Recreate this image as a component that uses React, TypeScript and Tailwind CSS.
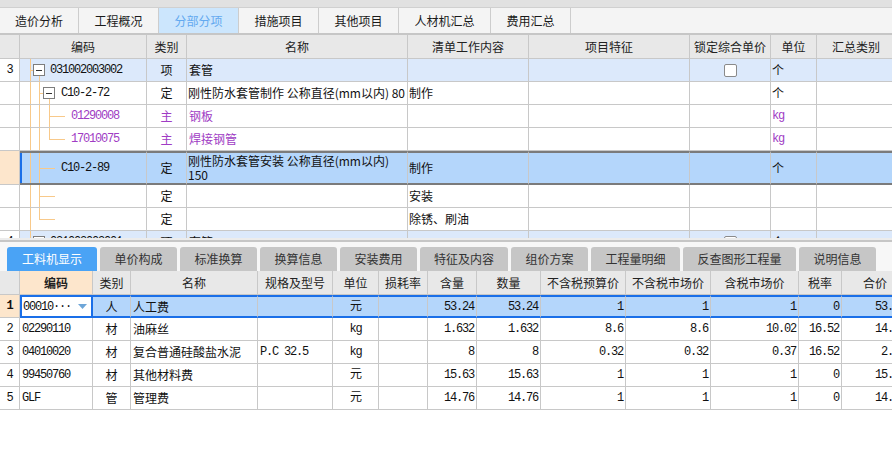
import React from 'react';

const CJK = "font-['Noto_Sans_CJK_SC',sans-serif]";
const MONO = "font-['Liberation_Mono','Noto_Sans_CJK_SC',monospace] tracking-[-1.2px]";
const C = 'border-r border-b border-[#c8c8c8]';
const ORANGE = '#f8c98a';
const PURPLE = 'text-[#a03cc4]';

const topTabs = [
  { t: '造价分析', w: 'w-[79px]' },
  { t: '工程概况', w: 'w-[80px]' },
  { t: '分部分项', w: 'w-[80px]', active: true },
  { t: '措施项目', w: 'w-[80px]' },
  { t: '其他项目', w: 'w-[80px]' },
  { t: '人材机汇总', w: 'w-[92px]' },
  { t: '费用汇总', w: 'w-[80px]' },
];

const bottomTabs = [
  { t: '工料机显示', w: 'w-[90px]', active: true },
  { t: '单价构成', w: 'w-[77px]' },
  { t: '标准换算', w: 'w-[77px]' },
  { t: '换算信息', w: 'w-[77px]' },
  { t: '安装费用', w: 'w-[77px]' },
  { t: '特征及内容', w: 'w-[88px]' },
  { t: '组价方案', w: 'w-[77px]' },
  { t: '工程量明细', w: 'w-[89px]' },
  { t: '反查图形工程量', w: 'w-[113px]' },
  { t: '说明信息', w: 'w-[77px]' },
];

// tree connector drawing for the 编码 column
function Tree({
  w,
  h,
  v,
  hz,
  box,
}: {
  w: number;
  h: number;
  v: [number, number, number][];
  hz?: [number, number, number];
  box?: number;
}) {
  const cy = Math.floor(h / 2);
  return (
    <svg width={w} height={h} className="shrink-0">
      {v.map(([x, y1, y2], i) => (
        <line key={i} x1={x + 0.5} y1={y1} x2={x + 0.5} y2={y2} stroke={ORANGE} />
      ))}
      {hz && <line x1={hz[0]} y1={hz[2] + 0.5} x2={hz[1]} y2={hz[2] + 0.5} stroke={ORANGE} />}
      {box !== undefined && (
        <g>
          <rect x={box + 0.5} y={cy - 5.5} width={11} height={11} fill="white" stroke="#7d7d7d" />
          <line x1={box + 3} y1={cy + 0.5} x2={box + 9} y2={cy + 0.5} stroke="#333" />
        </g>
      )}
    </svg>
  );
}

function Check() {
  return <div className="w-[13px] h-[13px] rounded-[2px] border border-[#8a8a8a] bg-white" />;
}

const UCOLS = 'grid w-max grid-cols-[20px_127px_40px_221px_121px_161px_81px_46px_79px]';

function UpperTable() {
  const head = ['', '编码', '类别', '名称', '清单工作内容', '项目特征', '锁定综合单价', '单位', '汇总类别'];
  const cell = `${C} flex items-center overflow-hidden whitespace-nowrap`;
  const blue = 'bg-[#dce9fb]';
  return (
    <div className="h-[203px] overflow-hidden">
      <div className={`${UCOLS} h-[24px] bg-[#e8e8e8]`}>
        {head.map((h, i) => (
          <div key={i} className={`${C} flex items-center justify-center text-[#222]`}>
            {h}
          </div>
        ))}
      </div>

      {/* row 1 */}
      <div className={`${UCOLS} h-[23px]`}>
        <div className={`${cell} justify-center ${MONO}`}>3</div>
        <div className={`${cell} ${blue}`}>
          <Tree w={30} h={22} v={[[10, 0, 22], [19, 17, 22]]} hz={[10, 13, 11]} box={13} />
          <span className={MONO}>031002003002</span>
        </div>
        <div className={`${cell} ${blue} justify-center`}>项</div>
        <div className={`${cell} ${blue} pl-[2px]`}>套管</div>
        <div className={`${cell} ${blue}`} />
        <div className={`${cell} ${blue}`} />
        <div className={`${cell} ${blue} justify-center`}>
          <Check />
        </div>
        <div className={`${cell} ${blue} pl-[1px]`}>个</div>
        <div className={`${cell} ${blue}`} />
      </div>

      {/* row 2 */}
      <div className={`${UCOLS} h-[23px]`}>
        <div className={cell} />
        <div className={cell}>
          <Tree w={41} h={22} v={[[10, 0, 22], [19, 0, 22], [29, 17, 22]]} hz={[19, 23, 11]} box={23} />
          <span className={MONO}>C10-2-72</span>
        </div>
        <div className={`${cell} justify-center`}>定</div>
        <div className={`${cell} pl-[1px]`}>刚性防水套管制作 公称直径(mm以内) 80</div>
        <div className={`${cell} pl-[1px]`}>制作</div>
        <div className={cell} />
        <div className={cell} />
        <div className={`${cell} pl-[1px]`}>个</div>
        <div className={cell} />
      </div>

      {/* rows 3-4 */}
      {[
        { code: '01290008', name: '钢板', last: false },
        { code: '17010075', name: '焊接钢管', last: true },
      ].map((r) => (
        <div key={r.code} className={`${UCOLS} h-[23px]`}>
          <div className={cell} />
          <div className={cell}>
            <Tree
              w={51}
              h={22}
              v={[[10, 0, 22], [19, 0, 22], [29, 0, r.last ? 12 : 22]]}
              hz={[29, 45, 11]}
            />
            <span className={`${MONO} ${PURPLE}`}>{r.code}</span>
          </div>
          <div className={`${cell} justify-center ${PURPLE}`}>主</div>
          <div className={`${cell} pl-[2px] ${PURPLE}`}>{r.name}</div>
          <div className={cell} />
          <div className={cell} />
          <div className={cell} />
          <div className={`${cell} pl-[1px] ${MONO} ${PURPLE}`}>kg</div>
          <div className={cell} />
        </div>
      ))}

      {/* selected row */}
      <div className={`${UCOLS} h-[34px]`}>
        <div className={`${C} bg-[#fde6cc]`} />
        {Array.from({ length: 8 }).map((_, i) => (
          <div
            key={i}
            className={`flex items-center overflow-hidden whitespace-nowrap bg-[#b4d6fb] border-y-2 border-y-[#7b7b7b] border-r border-r-[#c8c8c8] ${
              i === 0 ? 'shadow-[inset_2px_0_0_#1a6fe8]' : ''
            } ${i === 1 ? 'justify-center' : ''} ${i === 2 || i === 3 || i === 6 ? 'pl-[1px]' : ''}`}
          >
            {i === 0 && (
              <>
                <Tree w={41} h={30} v={[[10, 0, 30], [19, 0, 30]]} hz={[19, 35, 15]} />
                <span className={MONO}>C10-2-89</span>
              </>
            )}
            {i === 1 && '定'}
            {i === 2 && (
              <div className="flex flex-col leading-[14px]">
                <span>刚性防水套管安装 公称直径(mm以内)</span>
                <span>150</span>
              </div>
            )}
            {i === 3 && '制作'}
            {i === 6 && '个'}
          </div>
        ))}
      </div>

      {/* rows 6-7 */}
      {[
        { work: '安装', last: false },
        { work: '除锈、刷油', last: true },
      ].map((r) => (
        <div key={r.work} className={`${UCOLS} h-[23px]`}>
          <div className={cell} />
          <div className={cell}>
            <Tree w={41} h={22} v={[[10, 0, 22], [19, 0, r.last ? 12 : 22]]} hz={[19, 35, 11]} />
          </div>
          <div className={`${cell} justify-center`}>定</div>
          <div className={cell} />
          <div className={`${cell} pl-[1px]`}>{r.work}</div>
          <div className={cell} />
          <div className={cell} />
          <div className={cell} />
          <div className={cell} />
        </div>
      ))}

      {/* next item, cut off by the splitter */}
      <div className={`${UCOLS} h-[23px]`}>
        <div className={`${cell} justify-center ${MONO}`}>4</div>
        <div className={`${cell} ${blue}`}>
          <Tree w={30} h={22} v={[[10, 0, 22], [19, 17, 22]]} hz={[10, 13, 11]} box={13} />
          <span className={MONO}>031002003001</span>
        </div>
        <div className={`${cell} ${blue} justify-center`}>项</div>
        <div className={`${cell} ${blue} pl-[2px]`}>套管</div>
        <div className={`${cell} ${blue}`} />
        <div className={`${cell} ${blue}`} />
        <div className={`${cell} ${blue} justify-center`}>
          <Check />
        </div>
        <div className={`${cell} ${blue} pl-[1px]`}>个</div>
        <div className={`${cell} ${blue}`} />
      </div>
    </div>
  );
}

const LCOLS =
  'grid w-max grid-cols-[20px_73px_38px_127px_75px_46px_49px_49px_64px_85px_85px_88px_43px_67px]';

const lowerRows = [
  ['1', '00010···', '人', '人工费', '', '元', '', '53.24', '53.24', '1', '1', '1', '0', '53.24'],
  ['2', '02290110', '材', '油麻丝', '', 'kg', '', '1.632', '1.632', '8.6', '8.6', '10.02', '16.52', '14.04'],
  ['3', '04010020', '材', '复合普通硅酸盐水泥', 'P.C 32.5', 'kg', '', '8', '8', '0.32', '0.32', '0.37', '16.52', '2.56'],
  ['4', '99450760', '材', '其他材料费', '', '元', '', '15.63', '15.63', '1', '1', '1', '0', '15.63'],
  ['5', 'GLF', '管', '管理费', '', '元', '', '14.76', '14.76', '1', '1', '1', '0', '14.76'],
];

function lowerAlign(i: number) {
  if (i === 0) return `justify-center ${MONO}`;
  if (i === 1 || i === 4) return `pl-[2px] ${MONO}`;
  if (i === 2) return 'justify-center';
  if (i === 3) return 'pl-[2px]';
  if (i === 5) return `justify-center ${MONO}`;
  if (i === 13) return `justify-end pr-[3px] ${MONO}`;
  return `justify-end pr-[2px] ${MONO}`;
}

function LowerTable() {
  const head = ['', '编码', '类别', '名称', '规格及型号', '单位', '损耗率', '含量', '数量', '不含税预算价', '不含税市场价', '含税市场价', '税率', '合价'];
  return (
    <div className="overflow-hidden">
      <div className={`${LCOLS} h-[24px] bg-[#e8e8e8]`}>
        {head.map((h, i) => (
          <div
            key={i}
            className={`${C} flex items-center justify-center text-[#222] ${
              i === 1 ? 'bg-[#fde6cc] font-bold text-[#111]' : ''
            }`}
          >
            {h}
          </div>
        ))}
      </div>
      {lowerRows.map((r, ri) => (
        <div key={ri} className={`${LCOLS} h-[23px]`}>
          {r.map((v, i) => {
            if (ri === 0 && i === 0)
              return (
                <div key={i} className={`${C} flex items-center justify-center bg-[#fde6cc] font-bold ${MONO}`}>
                  {v}
                </div>
              );
            if (ri === 0 && i === 1)
              return (
                <div
                  key={i}
                  className="flex items-center justify-between border-2 border-[#1a6fe8] bg-white pl-[1px] pr-[4px]"
                >
                  <span className={MONO}>{v}</span>
                  <svg width="9" height="5" className="shrink-0">
                    <polygon points="0,0 9,0 4.5,5" fill="#6ea6d8" />
                  </svg>
                </div>
              );
            if (ri === 0)
              return (
                <div
                  key={i}
                  className={`flex items-center overflow-hidden whitespace-nowrap bg-[#b4d6fb] border-y-2 border-y-[#1a6fe8] border-r border-r-[#c8c8c8] ${lowerAlign(i)}`}
                >
                  {v}
                </div>
              );
            return (
              <div key={i} className={`${C} flex items-center overflow-hidden whitespace-nowrap ${lowerAlign(i)}`}>
                {v}
              </div>
            );
          })}
        </div>
      ))}
    </div>
  );
}

export default function App() {
  return (
    <div className={`w-[892px] h-[464px] overflow-hidden bg-white text-[12px] text-[#111] ${CJK}`}>
      <div className="h-[8px] bg-[#e1e1e1] border-b border-[#d0d0d0]" />

      {/* top module tabs */}
      <div className="flex h-[27px] border-b-2 border-[#c6c6c6] bg-[#f4f4f4]">
        {topTabs.map((t) => (
          <div
            key={t.t}
            className={`flex items-center justify-center border-r border-[#cdcdcd] text-[12px] ${t.w} ${
              t.active ? 'bg-[#cce6fd] text-[#63a9f0]' : 'text-[#1a1a1a]'
            }`}
          >
            {t.t}
          </div>
        ))}
      </div>

      <UpperTable />

      <div className="h-[2px] bg-[#ececec]" />
      <div className="h-[2px] bg-[#c6c6c6]" />

      {/* bottom detail tabs */}
      <div className="flex h-[29px] items-end gap-[3px] bg-[#f7f7f7] pl-[7px]">
        {bottomTabs.map((t) => (
          <div
            key={t.t}
            className={`flex h-[24px] items-center justify-center rounded-t-[3px] text-[12px] ${t.w} ${
              t.active ? 'bg-[#4aa3f5] text-white' : 'bg-[#c6c6c6] text-[#333]'
            }`}
          >
            {t.t}
          </div>
        ))}
      </div>

      <LowerTable />
    </div>
  );
}
